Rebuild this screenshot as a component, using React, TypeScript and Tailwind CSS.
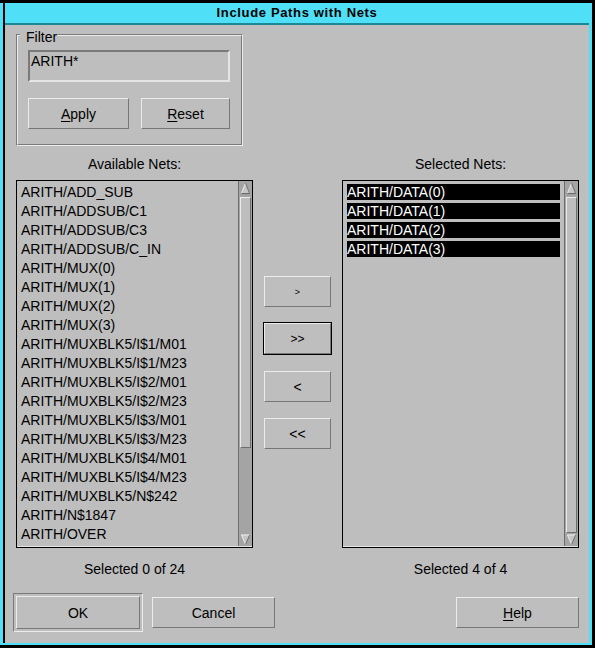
import React from "react";

const LIGHT = "border-t-[#ececec] border-l-[#ececec] border-b-[#777777] border-r-[#777777]";

function RaisedButton({
  className = "",
  children,
}: {
  className?: string;
  children: React.ReactNode;
}) {
  return (
    <div
      className={`flex items-center justify-center border bg-[#bebebe] text-[14px] leading-[16px] text-black ${LIGHT} ${className}`}
    >
      {children}
    </div>
  );
}

function UpArrow() {
  return (
    <svg width="12" height="15" viewBox="0 0 12 15" className="block">
      <polygon points="6,2 10.5,13 1.5,13" fill="#c6c6c6" />
      <line x1="6" y1="1.5" x2="1.5" y2="13" stroke="#eeeeee" strokeWidth="1" />
      <line x1="6" y1="1.5" x2="10.5" y2="13" stroke="#6a6a6a" strokeWidth="1" />
      <line x1="1.5" y1="13" x2="10.5" y2="13" stroke="#6a6a6a" strokeWidth="1.2" />
    </svg>
  );
}

function DownArrow() {
  return (
    <svg width="12" height="13" viewBox="0 0 12 13" className="block">
      <polygon points="1.5,1.5 10.5,1.5 6,12" fill="#c6c6c6" />
      <line x1="1.5" y1="1.5" x2="10.5" y2="1.5" stroke="#eeeeee" strokeWidth="1.2" />
      <line x1="1.5" y1="1.5" x2="6" y2="12" stroke="#eeeeee" strokeWidth="1" />
      <line x1="10.5" y1="1.5" x2="6" y2="12" stroke="#6a6a6a" strokeWidth="1" />
    </svg>
  );
}

function Scrollbar({ full }: { full: boolean }) {
  return (
    <div className="flex w-[14px] flex-col border-l border-[#6e6e6e] bg-[#a4a4a4] px-[1px]">
      <div className="flex h-[16px] items-start justify-center">
        <UpArrow />
      </div>
      <div
        className={`${full ? "flex-1" : "h-[251px]"} border bg-[#bebebe] border-t-[#ececec] border-l-[#ececec] border-b-[#6e6e6e] border-r-[#6e6e6e]`}
      />
      {full ? null : <div className="flex-1" />}
      <div className="flex h-[13px] items-end justify-center">
        <DownArrow />
      </div>
    </div>
  );
}

const available = [
  "ARITH/ADD_SUB",
  "ARITH/ADDSUB/C1",
  "ARITH/ADDSUB/C3",
  "ARITH/ADDSUB/C_IN",
  "ARITH/MUX(0)",
  "ARITH/MUX(1)",
  "ARITH/MUX(2)",
  "ARITH/MUX(3)",
  "ARITH/MUXBLK5/I$1/M01",
  "ARITH/MUXBLK5/I$1/M23",
  "ARITH/MUXBLK5/I$2/M01",
  "ARITH/MUXBLK5/I$2/M23",
  "ARITH/MUXBLK5/I$3/M01",
  "ARITH/MUXBLK5/I$3/M23",
  "ARITH/MUXBLK5/I$4/M01",
  "ARITH/MUXBLK5/I$4/M23",
  "ARITH/MUXBLK5/N$242",
  "ARITH/N$1847",
  "ARITH/OVER",
];

const selected = ["ARITH/DATA(0)", "ARITH/DATA(1)", "ARITH/DATA(2)", "ARITH/DATA(3)"];

function ListBox({
  items,
  highlighted,
  full,
}: {
  items: string[];
  highlighted: boolean;
  full: boolean;
}) {
  return (
    <div className="flex h-[368px] w-[237px] border border-black">
      <div className="flex flex-1 border-b border-[#e4e4e4]">
        <div className="flex flex-1 flex-col gap-[3px] overflow-hidden pl-[4px] pr-[4px] pt-[3px]">
          {items.map((it) => (
            <div
              key={it}
              className={`h-[16px] shrink-0 whitespace-nowrap text-[14px] leading-[16px] ${
                highlighted ? "bg-black text-white" : "text-black"
              }`}
            >
              {it}
            </div>
          ))}
        </div>
        <Scrollbar full={full} />
      </div>
    </div>
  );
}

export default function App() {
  return (
    <div className="flex h-[648px] w-[595px] bg-black pb-[3px] pr-[3px] pt-[3px] font-['Liberation_Sans',Arial,sans-serif] text-black">
      <div className="flex flex-1 bg-[#4fe0f8] pb-[2px] pl-[3px] pr-[3px]">
        <div className="flex flex-1 flex-col border-l-2 border-black">
          {/* title bar */}
          <div className="flex h-[20px] items-center justify-center bg-[#4fe0f8] text-[13px] font-bold leading-[20px] tracking-[0.65px] text-black">
            Include Paths with Nets
          </div>
          <div className="h-[2px] bg-[#1b8797]" />

          {/* content */}
          <div className="flex flex-1 flex-col bg-[#bebebe] pl-[11px] pt-[9px]">
            {/* Filter group */}
            <div className="relative h-[112px] w-[227px] border border-t-[#7a7a7a] border-l-[#7a7a7a] border-b-[#ececec] border-r-[#ececec]">
              <div className="h-full w-full border border-t-[#ececec] border-l-[#ececec] border-b-[#7a7a7a] border-r-[#7a7a7a] pl-[10px] pt-[14px]">
                <div className="h-[32px] w-[202px] border-2 border-t-[#7a7a7a] border-l-[#7a7a7a] border-b-[#e4e4e4] border-r-[#e4e4e4] pl-[1px] pt-[1px] text-[14px] leading-[16px]">
                  ARITH*
                </div>
                <div className="mt-[16px] flex gap-[12px]">
                  <RaisedButton className="h-[31px] w-[101px]">
                    <span>
                      <span className="underline underline-offset-2">A</span>pply
                    </span>
                  </RaisedButton>
                  <RaisedButton className="h-[31px] w-[89px]">
                    <span>
                      <span className="underline underline-offset-2">R</span>eset
                    </span>
                  </RaisedButton>
                </div>
              </div>
              <div className="absolute left-[3px] top-[-6px] bg-[#bebebe] pl-[6px] pr-[1px] text-[14px] leading-[16px]">
                Filter
              </div>
            </div>

            {/* column labels */}
            <div className="mt-[10px] flex text-[14px] leading-[16px]">
              <div className="w-[237px] text-center">Available Nets:</div>
              <div className="w-[89px]" />
              <div className="w-[237px] text-center">Selected Nets:</div>
            </div>

            {/* lists */}
            <div className="mt-[8px] flex">
              <ListBox items={available} highlighted={false} full={false} />
              <div className="flex w-[89px] flex-col items-center pt-[96px]">
                <RaisedButton className="h-[31px] w-[67px]">
                  <span className="text-[9px]">&gt;</span>
                </RaisedButton>
                <div className="mt-[15px] border border-black">
                  <RaisedButton className="h-[31px] w-[67px]">
                    <span className="text-[12px]">&gt;&gt;</span>
                  </RaisedButton>
                </div>
                <RaisedButton className="mt-[16px] h-[31px] w-[67px]">&lt;</RaisedButton>
                <RaisedButton className="mt-[16px] h-[31px] w-[67px]">&lt;&lt;</RaisedButton>
              </div>
              <ListBox items={selected} highlighted={true} full={true} />
            </div>

            {/* counts */}
            <div className="mt-[13px] flex text-[14px] leading-[16px]">
              <div className="w-[237px] text-center">Selected 0 of 24</div>
              <div className="w-[89px]" />
              <div className="w-[237px] text-center">Selected 4 of 4</div>
            </div>

            {/* bottom buttons */}
            <div className="ml-[-3px] mt-[16px] flex items-center">
              <div className="h-[39px] w-[130px] border border-t-[#7a7a7a] border-l-[#7a7a7a] border-b-[#ececec] border-r-[#ececec] p-[2px]">
                <RaisedButton className="h-full w-full">OK</RaisedButton>
              </div>
              <RaisedButton className="ml-[9px] h-[31px] w-[123px]">Cancel</RaisedButton>
              <RaisedButton className="ml-[181px] h-[31px] w-[123px]">
                <span>
                  <span className="underline underline-offset-2">H</span>elp
                </span>
              </RaisedButton>
            </div>
          </div>
        </div>
      </div>
    </div>
  );
}
